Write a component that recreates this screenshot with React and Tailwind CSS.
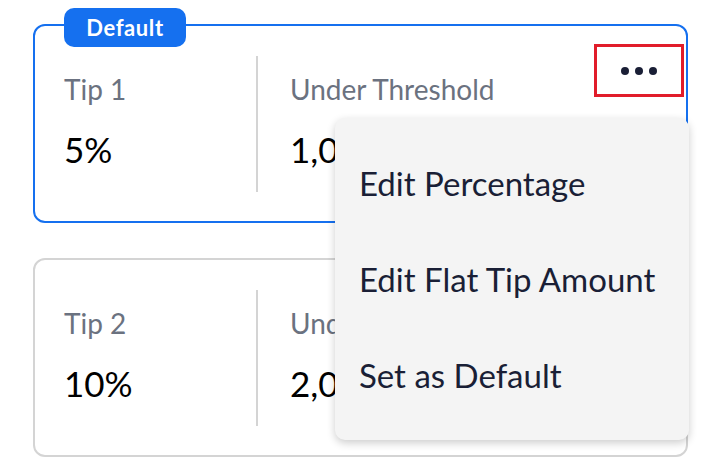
import { useState } from 'react';

const tips = [
  { id: 1, name: 'Tip 1', percent: '5%', threshold: '1,000.00', isDefault: true },
  { id: 2, name: 'Tip 2', percent: '10%', threshold: '2,000.00', isDefault: false },
];

const menuItems = ['Edit Percentage', 'Edit Flat Tip Amount', 'Set as Default'];

function TipCard({ tip, menuOpen, onToggle }) {
  return (
    <div
      className={`relative flex h-[199px] rounded-[12px] border-2 bg-white pl-[29px] pt-[30px] pb-[29px] ${
        tip.isDefault ? 'border-[#1570ef]' : 'border-[#d4d4d4]'
      }`}
    >
      {tip.isDefault && (
        <span className="absolute left-[29px] top-[-18px] flex h-[39px] w-[122px] items-center justify-center rounded-[10px] bg-[#1570ef] text-[22px] font-bold tracking-[0.6px] text-white">
          Default
        </span>
      )}

      <div className="flex w-[194px] flex-col border-r-2 border-[#d4d4d4]">
        <span className="mt-[17px] text-[28px] leading-[32px] text-[#6b7280]">{tip.name}</span>
        <span className="mt-[24px] text-[35px] leading-[40px] text-black">{tip.percent}</span>
      </div>

      <div className="flex flex-col pl-[32px]">
        <span className="mt-[17px] text-[28px] leading-[32px] text-[#6b7280]">Under Threshold</span>
        <span className="mt-[24px] text-[35px] leading-[40px] text-black">{tip.threshold}</span>
      </div>

      {tip.isDefault && (
        <button
          onClick={onToggle}
          className="absolute right-[2px] top-[18px] flex h-[53px] w-[90px] items-center justify-center gap-[6px] border-[3px] border-[#e11d2a]"
        >
          <span className="h-[8px] w-[8px] rounded-full bg-[#1a1f36]" />
          <span className="h-[8px] w-[8px] rounded-full bg-[#1a1f36]" />
          <span className="h-[8px] w-[8px] rounded-full bg-[#1a1f36]" />
        </button>
      )}

      {tip.isDefault && menuOpen && (
        <div className="absolute left-[300px] top-[92px] z-10 flex h-[322px] w-[354px] flex-col rounded-[10px] bg-[#f4f4f4] pt-[18px] shadow-[0_3px_8px_rgba(0,0,0,0.2)]">
          {menuItems.map((item) => (
            <button
              key={item}
              className="flex h-[96px] items-center px-[24px] text-left text-[33px] text-[#1a1f36]"
            >
              {item}
            </button>
          ))}
        </div>
      )}
    </div>
  );
}

export default function App() {
  const [menuOpen, setMenuOpen] = useState(true);

  return (
    <div
      className="h-[475px] w-[720px] overflow-hidden bg-white pl-[33px] pr-[32px] pt-[24px]"
      style={{ fontFamily: 'Lato, "Noto Sans", sans-serif' }}
    >
      <div className="flex flex-col gap-[35px]">
        {tips.map((tip) => (
          <TipCard
            key={tip.id}
            tip={tip}
            menuOpen={menuOpen}
            onToggle={() => setMenuOpen(!menuOpen)}
          />
        ))}
      </div>
    </div>
  );
}
